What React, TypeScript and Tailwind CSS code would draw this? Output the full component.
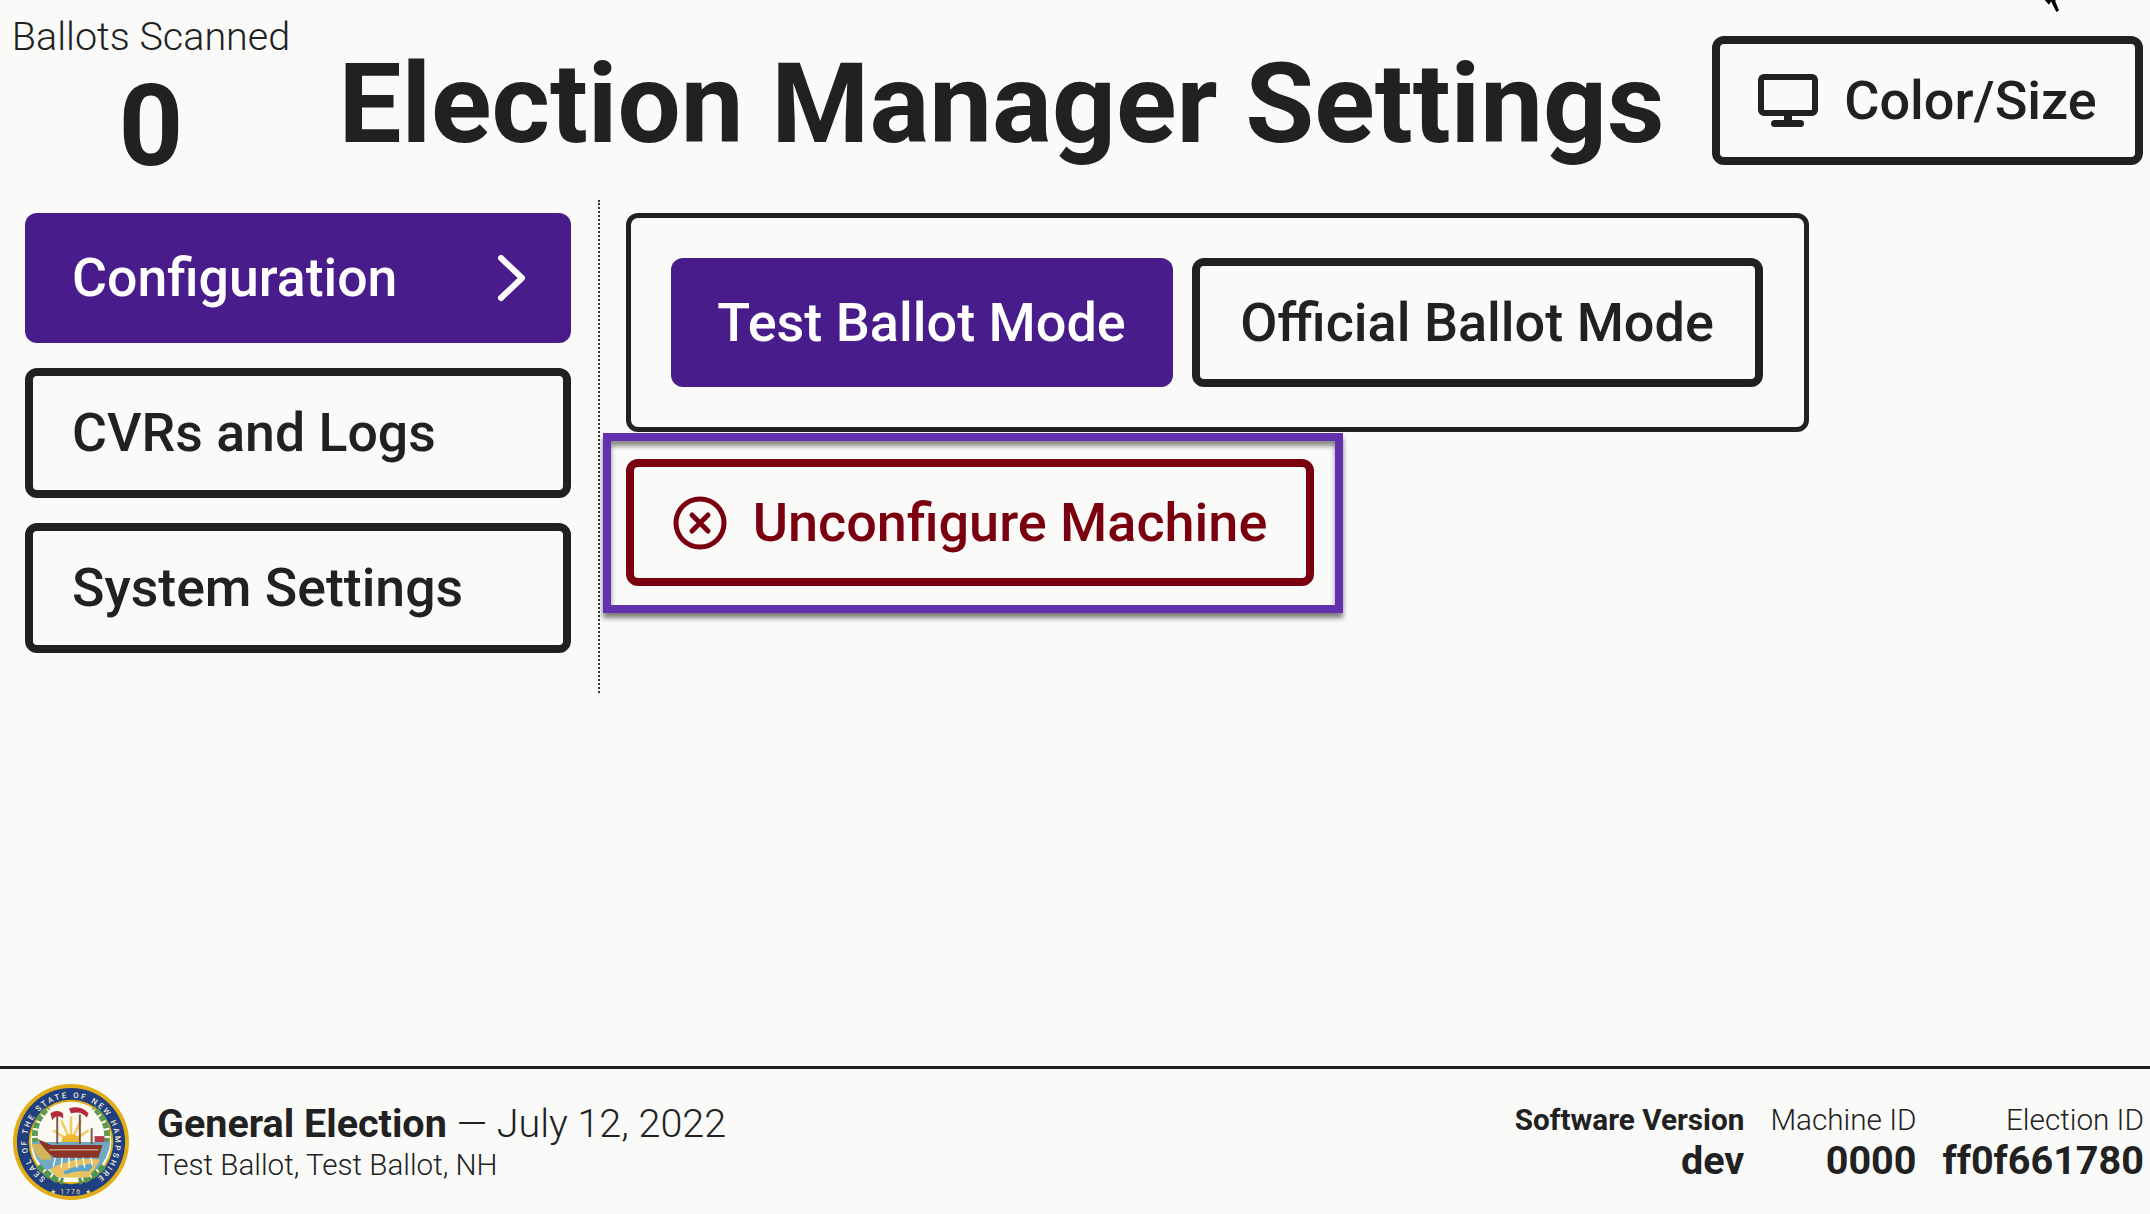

function Seal() {
  return (
    <svg width="118" height="118" viewBox="0 0 120 120" className="shrink-0">
      <defs>
        <path id="sealRing" d="M34.2 96.9 A45 45 0 1 1 85.8 96.9" />
      </defs>
      <circle cx="60" cy="60" r="59" fill="#e2ac14" />
      <circle cx="60" cy="60" r="55" fill="#1f3f80" />
      <circle cx="60" cy="60" r="43" fill="#e2ac14" />
      <circle cx="60" cy="60" r="41" fill="#fbfaf2" />
      <text fill="#f2ead0" fontSize="8" fontFamily="Roboto, sans-serif" fontWeight="500">
        <textPath href="#sealRing" textLength="226">SEAL OF THE STATE OF NEW HAMPSHIRE</textPath>
      </text>
      <text x="60" y="113" textAnchor="middle" fill="#f4d98a" fontSize="7" fontFamily="Roboto, sans-serif" letterSpacing="1.5">★ 1776 ★</text>
      <path d="M24 62 Q20 40 37 25" fill="none" stroke="#5d9a56" strokeWidth="6" strokeDasharray="6 2" />
      <path d="M96 62 Q100 40 83 25" fill="none" stroke="#5d9a56" strokeWidth="6" strokeDasharray="6 2" />
      <path d="M27 84 Q38 97 52 100" fill="none" stroke="#4f9458" strokeWidth="7" strokeDasharray="7 2" />
      <path d="M93 84 Q82 97 68 100" fill="none" stroke="#4f9458" strokeWidth="7" strokeDasharray="7 2" />
      <g stroke="#f2cc63" strokeWidth="2.5">
        <path d="M60 60 L60 34" />
        <path d="M60 60 L50 38" />
        <path d="M60 60 L70 38" />
        <path d="M60 60 L42 48" />
        <path d="M60 60 L78 48" />
      </g>
      <path d="M50 60 a10 8 0 0 1 20 0 z" fill="#f0b92d" />
      <path d="M20 60 H100 Q98 78 86 88 H34 Q22 78 20 60 Z" fill="#6fa9c4" />
      <path d="M20 62 H36 L40 78 H30 Q22 72 20 62 Z" fill="#e3b54a" opacity="0.85" />
      <path d="M38 88 Q62 74 90 78 L78 96 H46 Z" fill="#e9c15e" />
      <path d="M52 90 Q68 82 84 82 L78 90 Q66 88 54 93 Z" fill="#5fa4cb" />
      <path d="M26 57 L40 63 H92 L88 76 H43 Q34 70 26 57 Z" fill="#8a3326" />
      <path d="M38 68 H88" stroke="#e8d6b0" strokeWidth="1" />
      <path d="M44 76 L42 85 M51 76 L50 86 M58 76 L58 86 M65 76 L66 86 M72 76 L74 86 M80 76 L82 84" stroke="#fff" strokeWidth="1.4" />
      <path d="M46 62 V32 M69 62 V32 M81 62 V46" stroke="#7a5a44" strokeWidth="2" />
      <path d="M39 31 Q46 26 52 31 L52 36 Q45 31 41 38 Z" fill="#b7283a" />
      <path d="M58 26 Q70 22 78 31 L76 35 Q70 28 60 31 Z" fill="#b7283a" />
      <path d="M84 54 H94 V60 H84 Z" fill="#b43a4a" />
    </svg>
  );
}

export default function App() {
  const navText = "flex items-center justify-between text-[53.6px] font-medium rounded-[12px] h-[130px]";
  const outlineBtn = "border-[8px] border-[#212121] bg-[#fafaf8] text-[#212121] pl-[39px] pr-[35px]";
  return (
    <div className="relative h-[1214px] w-[2150px] overflow-hidden flex flex-col bg-[#fafaf8] text-[#212121] font-['Roboto',sans-serif]">
      <svg width="24" height="16" viewBox="0 0 24 16" className="absolute left-[2040px] top-0">
        <path d="M2 -2 L9 6 L11 3 L16 13 L20 11 L16 1 L20 -2 Z" fill="#000" stroke="#fff" strokeWidth="1.5" />
      </svg>

      <header className="h-[200px] flex items-start shrink-0">
        <div className="w-[302px] flex flex-col items-center pt-[14px]">
          <div className="text-[39.5px] leading-[46px] font-light">Ballots Scanned</div>
          <div className="text-[113px] leading-[112px] font-bold mt-[11px]">0</div>
        </div>
        <h1 className="flex-1 text-center text-[112px] leading-[132px] font-bold pt-[38px] pr-[11px]">Election Manager Settings</h1>
        <button className="mt-[36px] mr-[7px] w-[431px] h-[129px] rounded-[12px] border-[8px] border-[#212121] flex items-center justify-center gap-[26px] text-[54px] font-medium">
          <svg width="60" height="54" viewBox="0 0 60 54">
            <rect x="3" y="3" width="54" height="36" rx="3" fill="none" stroke="#212121" strokeWidth="6" />
            <rect x="26" y="42" width="8" height="5" fill="#212121" />
            <rect x="13" y="46" width="33" height="7" rx="3.5" fill="#212121" />
          </svg>
          Color/Size
        </button>
      </header>

      <main className="flex-1 flex items-start">
        <nav className="ml-[25px] w-[575px] pr-[27px] pt-[13px] pb-[40px] flex flex-col gap-[25px] border-r-2 border-dotted border-[#333]">
          <div className={`${navText} bg-[#491c8b] text-white pl-[47px] pr-[44px]`}>
            <span>Configuration</span>
            <svg width="30" height="48" viewBox="0 0 30 48">
              <path d="M4 4 L25 24 L4 44" fill="none" stroke="#fff" strokeWidth="6" strokeLinecap="round" strokeLinejoin="round" />
            </svg>
          </div>
          <div className={`${navText} ${outlineBtn}`}>CVRs and Logs</div>
          <div className={`${navText} ${outlineBtn}`}>System Settings</div>
        </nav>

        <section className="ml-[26px] pt-[13px] flex flex-col items-start gap-[27px]">
          <div className="w-[1183px] h-[219px] rounded-[12px] border-[5px] border-[#212121] flex items-center justify-center gap-[19px] pr-[2px]">
            <button className="w-[502px] h-[129px] rounded-[12px] bg-[#491c8b] text-white text-[54px] font-medium">Test Ballot Mode</button>
            <button className="w-[571px] h-[129px] rounded-[12px] border-[8px] border-[#212121] text-[54px] font-medium">Official Ballot Mode</button>
          </div>
          <div className="relative">
            <button className="w-[688px] h-[127px] rounded-[12px] border-[8px] border-[#7a0010] text-[#7a0010] text-[54px] font-medium flex items-center justify-center gap-[26px]">
              <svg width="54" height="54" viewBox="0 0 54 54">
                <circle cx="27" cy="27" r="24" fill="none" stroke="#7a0010" strokeWidth="5" />
                <path d="M19 19 L35 35 M35 19 L19 35" stroke="#7a0010" strokeWidth="5" strokeLinecap="round" />
              </svg>
              Unconfigure Machine
            </button>
            <div className="absolute -left-[23px] -right-[29px] -top-[26px] -bottom-[27px] border-[8px] border-[#6330ae] shadow-[0_5px_5px_rgba(0,0,0,0.5),inset_0_5px_5px_rgba(0,0,0,0.45)] pointer-events-none" />
          </div>
        </section>
      </main>

      <footer className="h-[148px] shrink-0 border-t-[3px] border-[#212121] flex items-center justify-between pl-[12px] pr-[6px]">
        <div className="flex items-center gap-[27px]">
          <Seal />
          <div>
            <div className="text-[39.5px] leading-[46px]"><span className="font-bold">General Election</span> <span className="font-light">— July 12, 2022</span></div>
            <div className="text-[29.6px] leading-[36px] font-light">Test Ballot, Test Ballot, NH</div>
          </div>
        </div>
        <div className="flex gap-[26px] text-right">
          <div>
            <div className="text-[29.7px] leading-[38px] font-bold">Software Version</div>
            <div className="text-[39.6px] leading-[44px] font-bold">dev</div>
          </div>
          <div>
            <div className="text-[29.7px] leading-[38px] font-light">Machine ID</div>
            <div className="text-[39.6px] leading-[44px] font-bold">0000</div>
          </div>
          <div>
            <div className="text-[29.7px] leading-[38px] font-light">Election ID</div>
            <div className="text-[39.6px] leading-[44px] font-bold">ff0f661780</div>
          </div>
        </div>
      </footer>
    </div>
  );
}
